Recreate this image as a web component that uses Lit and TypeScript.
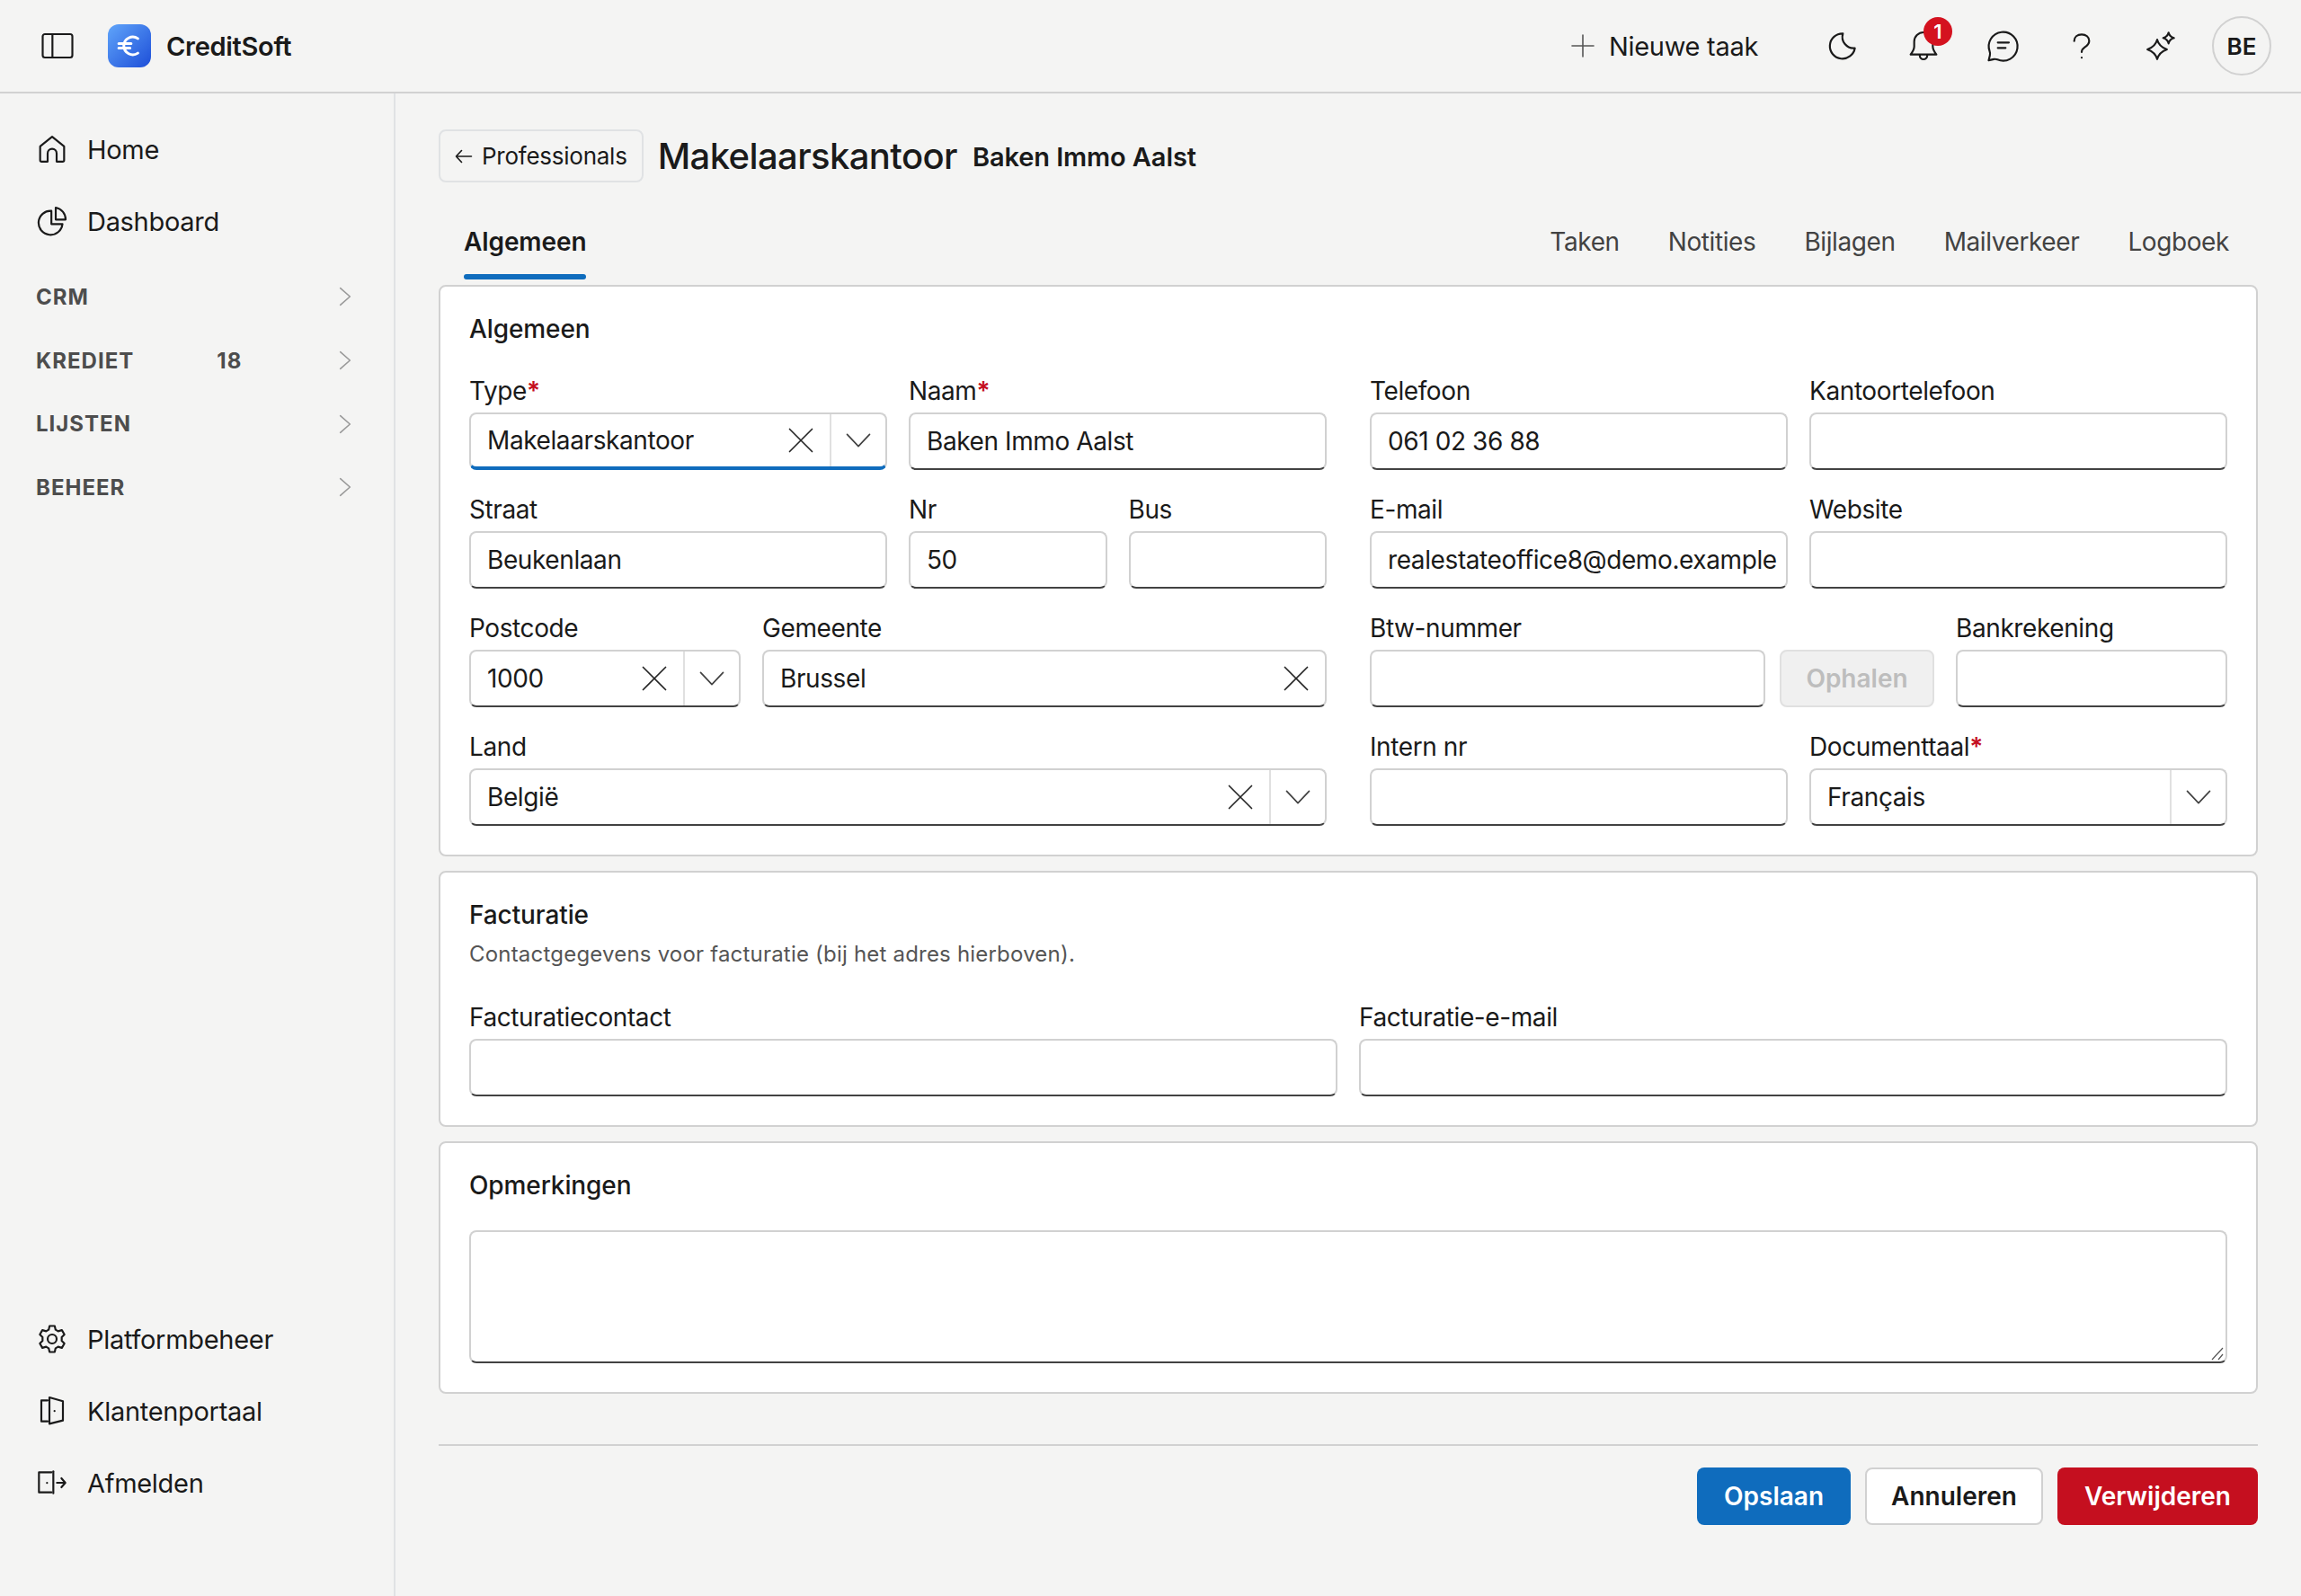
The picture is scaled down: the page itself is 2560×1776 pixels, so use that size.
import { LitElement, html, css, svg } from 'lit';
import { customElement } from 'lit/decorators.js';

const icon = (body: unknown, size = 40, sw = 1.3) => html`<svg class="icon" width=${size} height=${size} viewBox="0 0 24 24" fill="none" stroke="currentColor" stroke-width=${sw} stroke-linecap="round" stroke-linejoin="round">${body}</svg>`;

const icons = {
  panel: svg`<rect x="2.100" y="4.200" width="19.800" height="15.600" rx="1.500"/><path d="M8.600 4.200v15.600"/>`,
  home: svg`<path d="M5 20.300h4v-5.500a3 3 0 0 1 6 0v5.500h4a1 1 0 0 0 1-1v-9.200L12 3.700 4 10.100v9.200a1 1 0 0 0 1 1z"/>`,
  pie: svg`<path d="M11.500 5.200A8 8 0 1 0 18.900 14h-7.400z"/><path d="M14.400 3A8 8 0 0 1 21 11h-6.600z"/>`,
  gear: svg`<circle cx="12" cy="12" r="3"/><path d="M10.300 3.300h3.400l.6 2.500 1.700 1 2.500-.7 1.700 2.900-1.800 1.800v2.400l1.800 1.800-1.700 2.900-2.500-.7-1.700 1-.6 2.500h-3.400l-.6-2.500-1.700-1-2.500.7-1.700-2.900 1.800-1.800v-2.400L3.800 9l1.700-2.900 2.500.7 1.700-1z"/>`,
  door: svg`<path d="M9 5H4.800v14H9"/><path d="M10.200 3l9 2.600v12.800l-9 2.200z"/><path d="M13.600 12v.1"/>`,
  exit: svg`<path d="M11.600 5H3.200v13.400l8.400 0"/><path d="M12.800 4.400V19"/><path d="M8.600 12v.1"/><path d="M15.200 12h5.600M18.200 9l2.600 3-2.600 3"/>`,
  chevron: svg`<path d="M8 5l8 7-8 7"/>`,
  down: svg`<path d="M4.500 8L12 16l7.500-8"/>`,
  close: svg`<path d="M4.500 4.500l15 15M19.500 4.500l-15 15"/>`,
  plus: svg`<path d="M12 3v18M3 12h18"/>`,
  back: svg`<path d="M20.500 12H3.500M9.500 5.500L3.500 12l6 6.500"/>`,
  moon: svg`<path d="M11 3.800A8.400 8.400 0 1 0 19 13.500 7.500 7.500 0 0 1 11 3.800z"/>`,
  bell: svg`<path d="M12 3a6.200 6.200 0 0 0-6.200 6.200v3.300c0 2-1 3.500-2.400 5.300h17.200c-1.400-1.800-2.400-3.300-2.400-5.300V9.200A6.200 6.200 0 0 0 12 3z"/><path d="M9.500 18v.5a2.500 2.500 0 0 0 5 0V18"/>`,
  chat: svg`<path d="M3.400 15.800c.4 1 .4 1.500.1 2.700l-.8 3.200 3.500-.8c1-.2 1.500-.1 2.400.3A9.600 9.600 0 1 0 3.400 15.800z"/><path d="M8.800 9.800h7.400M8.800 13.400H14"/>`,
  help: svg`<path d="M7 8.800c0-2.800 2.200-4.400 5-4.400s5 1.700 5 4.300c0 2.200-1.400 3.200-3 4.300-1.300.9-2 1.700-2 3.200"/><path d="M12 19.800v.1"/>`,
  spark: svg`<path d="M9.600 7.900c.9 3.300 2.700 5.100 6.500 6.500-3.800 1.400-5.600 3.200-6.500 6.500-.9-3.300-2.700-5.100-6.500-6.500 3.800-1.400 5.600-3.200 6.500-6.500z"/><path d="M17.200 3.200c.4 1.800 1.500 3 3.600 3.600-2.100.6-3.200 1.800-3.600 3.600-.4-1.800-1.500-3-3.600-3.600 2.100-.6 3.200-1.800 3.600-3.600z"/>`,
};

@customElement('app-root')
export class AppRoot extends LitElement {
  static override styles = css`
    :host {
      display: block;
      height: 1776px;
      background: #f4f4f3;
      color: #1a1a1a;
      font-family: Inter, 'Liberation Sans', sans-serif;
      font-size: 28px;
      overflow: hidden;
    }
    .icon { display: block; flex: none; }

    header {
      height: 102px;
      box-sizing: content-box;
      border-bottom: 2px solid #d1d1d1;
      display: flex;
      align-items: center;
      padding: 0 33px 0 44px;
    }
    .logo {
      width: 48px;
      height: 48px;
      border-radius: 12px;
      margin-left: 36px;
      background: linear-gradient(135deg, #60a5fa, #1d4ed8);
      display: flex;
      align-items: center;
      justify-content: center;
      color: #fff;
    }
    .brand { font-size: 29px; letter-spacing: -0.3px; font-weight: 600; margin-left: 17px; }
    .new-task { margin-left: auto; display: flex; align-items: center; gap: 13px; font-size: 29px; letter-spacing: -0.3px; }
    .new-task .icon { color: #555; }
    .top-icons { display: flex; align-items: center; margin-left: 52px; }
    .top-btn { width: 88px; display: flex; justify-content: center; position: relative; }
    .badge {
      position: absolute;
      left: 44px;
      top: -12px;
      width: 32px;
      height: 32px;
      border-radius: 50%;
      background: #d4121f;
      color: #fff;
      font-size: 22px;
      font-weight: 600;
      display: flex;
      align-items: center;
      justify-content: center;
    }
    .avatar {
      width: 66px;
      height: 66px;
      box-sizing: border-box;
      border: 2px solid #d1d1d1;
      border-radius: 50%;
      margin-left: 13px;
      display: flex;
      align-items: center;
      justify-content: center;
      font-size: 26px;
      font-weight: 600;
    }

    .body { display: flex; height: 1672px; }
    aside {
      width: 440px;
      flex: none;
      box-sizing: border-box;
      border-right: 2px solid #e0e2e4;
      display: flex;
      flex-direction: column;
      padding-top: 22px;
      padding-bottom: 86px;
    }
    .nav-item {
      height: 80px;
      display: flex;
      align-items: center;
      gap: 19px;
      padding-left: 38px;
      font-size: 29px;
      letter-spacing: -0.3px;
    }
    .group {
      height: 70.7px;
      display: flex;
      align-items: center;
      padding: 0 38px 0 40px;
      font-size: 24px;
      font-weight: 700;
      letter-spacing: 1px;
      color: #4d4d4d;
    }
    .groups { margin-top: 9px; }
    .group .count { margin-left: 92px; }
    .group .icon { margin-left: auto; color: #999; }
    .spacer { flex: 1; }

    main { flex: 1; min-width: 0; padding: 40px 48px 0; }
    .title-row { display: flex; align-items: center; height: 59px; }
    .back {
      height: 59px;
      box-sizing: border-box;
      border: 2px solid #e0e2e4;
      border-radius: 8px;
      padding: 0 16px 0 14px;
      display: flex;
      align-items: center;
      gap: 8px;
      font-size: 26px;
      letter-spacing: -0.25px;
    }
    h1 { font-size: 40px; font-weight: 500; margin: 0 17px 0 16px; letter-spacing: -0.6px; }
    .subtitle { font-size: 29px; letter-spacing: -0.1px; font-weight: 600; margin-top: 2px; }

    .tabs {
      display: flex;
      height: 100px;
      margin-top: 16px;
      margin-bottom: -2px;
      padding: 0 32px 0 28px;
      gap: 54px;
      align-items: center;
      font-size: 28px;
      letter-spacing: -0.4px;
      color: #424242;
    }
    .tab-active { position: relative; font-weight: 600; letter-spacing: -0.1px; color: #1a1a1a; margin-right: auto; }
    .tab-active::after {
      content: '';
      position: absolute;
      left: 0;
      right: 0;
      bottom: -25px;
      height: 6px;
      border-radius: 3px;
      background: #0f6cbd;
    }

    .panel {
      background: #fff;
      border: 2px solid #d1d1d1;
      border-radius: 8px;
      padding: 29px 32px 32px;
      margin-bottom: 16px;
    }
    h2 { font-size: 28px; font-weight: 500; margin: 0; line-height: 36px; letter-spacing: -0.1px; }
    .desc { font-size: 24px; letter-spacing: 0.2px; color: #555; line-height: 32px; margin-top: 10px; }
    .form { display: grid; grid-template-columns: 1fr 1fr; column-gap: 48px; margin-top: 35px; }
    .twelve { display: grid; grid-template-columns: repeat(12, 1fr); column-gap: 24px; row-gap: 28px; }
    .s3 { grid-column: span 3; }
    .s4 { grid-column: span 4; }
    .s6 { grid-column: span 6; }
    .s8 { grid-column: span 8; }
    .s12 { grid-column: span 12; }
    label { display: block; line-height: 32px; margin-bottom: 8px; font-size: 28px; letter-spacing: -0.4px; }
    label b { color: #c50f1f; font-weight: 600; }

    .input {
      height: 64px;
      box-sizing: border-box;
      border: 2px solid #d1d1d1;
      border-bottom: 2px solid #424242;
      border-radius: 8px;
      background: #fff;
      display: flex;
      align-items: center;
      padding-left: 18px;
      font-size: 28px;
      letter-spacing: -0.4px;
      white-space: nowrap;
      overflow: hidden;
    }
    .input .val { flex: 1; min-width: 0; }
    .input .x { margin-right: 12px; color: #242424; }
    .input .arrow {
      width: 62px;
      height: 100%;
      flex: none;
      border-left: 2px solid #e0e0e0;
      display: flex;
      align-items: center;
      justify-content: center;
      box-sizing: border-box;
      color: #424242;
    }
    .focus { border-bottom: 4px solid #0f6cbd; }
    .with-btn { display: flex; gap: 16px; }
    .with-btn .input { flex: 1; min-width: 0; }
    .fetch {
      width: 172px;
      height: 64px;
      box-sizing: border-box;
      border: 2px solid #e0e0e0;
      border-radius: 8px;
      background: #f0f0f0;
      color: #bdbdbd;
      font-size: 28px;
      font-weight: 600;
      display: flex;
      align-items: center;
      justify-content: center;
    }
    .two { display: grid; grid-template-columns: 1fr 1fr; column-gap: 24px; margin-top: 38px; }
    .area {
      height: 148px;
      margin-top: 32px;
      position: relative;
    }
    .area .grip { position: absolute; right: 0; bottom: 0; color: #555; }

    .actions {
      border-top: 2px solid #d1d1d1;
      margin-top: 56px;
      padding-top: 24px;
      display: flex;
      justify-content: flex-end;
      gap: 16px;
    }
    .btn {
      height: 64px;
      box-sizing: border-box;
      border-radius: 8px;
      padding: 0 30px;
      display: flex;
      align-items: center;
      font-size: 28px;
      font-weight: 600;
      color: #fff;
    }
    .primary { background: #0f6cbd; }
    .secondary { background: #fff; border: 2px solid #d1d1d1; color: #1a1a1a; padding: 0 27px; }
    .danger { background: #c50f1f; }
  `;

  private field(label: string, value = '', opts: { req?: boolean; clear?: boolean; arrow?: boolean; focus?: boolean; span?: string } = {}) {
    return html`<div class=${opts.span ?? ''}>
      <label>${label}${opts.req ? html`<b>*</b>` : ''}</label>
      ${this.box(value, opts)}
    </div>`;
  }

  private box(value: string, opts: { clear?: boolean; arrow?: boolean; focus?: boolean } = {}) {
    return html`<div class="input ${opts.focus ? 'focus' : ''}">
      <span class="val">${value}</span>
      ${opts.clear ? html`<span class="x">${icon(icons.close, 40, 1)}</span>` : ''}
      ${opts.arrow ? html`<span class="arrow">${icon(icons.down, 40, 1)}</span>` : ''}
    </div>`;
  }

  override render() {
    return html`
      <header>
        ${icon(icons.panel, 40, 1.3)}
        <div class="logo">
          <svg width="30" height="30" viewBox="0 0 24 24" fill="none" stroke="currentColor" stroke-width="2.400" stroke-linecap="round"><path d="M19.500 5.500A8 8 0 0 0 7 12a8 8 0 0 0 12.500 6.500M2.500 10h11M2.500 14h10"/></svg>
        </div>
        <div class="brand">CreditSoft</div>
        <div class="new-task">${icon(icons.plus, 32, 1.2)}<span>Nieuwe taak</span></div>
        <div class="top-icons">
          <div class="top-btn">${icon(icons.moon)}</div>
          <div class="top-btn">${icon(icons.bell)}<span class="badge">1</span></div>
          <div class="top-btn">${icon(icons.chat)}</div>
          <div class="top-btn">${icon(icons.help)}</div>
          <div class="top-btn">${icon(icons.spark)}</div>
        </div>
        <div class="avatar">BE</div>
      </header>
      <div class="body">
        <aside>
          <div class="nav-item">${icon(icons.home)}Home</div>
          <div class="nav-item">${icon(icons.pie)}Dashboard</div>
          <div class="groups">
            <div class="group">CRM${icon(icons.chevron, 32, 1.2)}</div>
            <div class="group"><span>KREDIET</span><span class="count">18</span>${icon(icons.chevron, 32, 1.2)}</div>
            <div class="group">LIJSTEN${icon(icons.chevron, 32, 1.2)}</div>
            <div class="group">BEHEER${icon(icons.chevron, 32, 1.2)}</div>
          </div>
          <div class="spacer"></div>
          <div class="nav-item">${icon(icons.gear)}Platformbeheer</div>
          <div class="nav-item">${icon(icons.door)}Klantenportaal</div>
          <div class="nav-item">${icon(icons.exit)}Afmelden</div>
        </aside>
        <main>
          <div class="title-row">
            <div class="back">${icon(icons.back, 24, 1.6)}Professionals</div>
            <h1>Makelaarskantoor</h1>
            <span class="subtitle">Baken Immo Aalst</span>
          </div>
          <div class="tabs">
            <span class="tab-active">Algemeen</span>
            <span>Taken</span><span>Notities</span><span>Bijlagen</span><span>Mailverkeer</span><span>Logboek</span>
          </div>
          <section class="panel">
            <h2>Algemeen</h2>
            <div class="form">
              <div class="twelve">
                ${this.field('Type', 'Makelaarskantoor', { req: true, clear: true, arrow: true, focus: true, span: 's6' })}
                ${this.field('Naam', 'Baken Immo Aalst', { req: true, span: 's6' })}
                ${this.field('Straat', 'Beukenlaan', { span: 's6' })}
                ${this.field('Nr', '50', { span: 's3' })}
                ${this.field('Bus', '', { span: 's3' })}
                ${this.field('Postcode', '1000', { clear: true, arrow: true, span: 's4' })}
                ${this.field('Gemeente', 'Brussel', { clear: true, span: 's8' })}
                ${this.field('Land', 'België', { clear: true, arrow: true, span: 's12' })}
              </div>
              <div class="twelve">
                ${this.field('Telefoon', '061 02 36 88', { span: 's6' })}
                ${this.field('Kantoortelefoon', '', { span: 's6' })}
                ${this.field('E-mail', 'realestateoffice8@demo.example', { span: 's6' })}
                ${this.field('Website', '', { span: 's6' })}
                <div class="s8">
                  <label>Btw-nummer</label>
                  <div class="with-btn">${this.box('')}<div class="fetch">Ophalen</div></div>
                </div>
                ${this.field('Bankrekening', '', { span: 's4' })}
                ${this.field('Intern nr', '', { span: 's6' })}
                ${this.field('Documenttaal', 'Français', { req: true, arrow: true, span: 's6' })}
              </div>
            </div>
          </section>
          <section class="panel">
            <h2>Facturatie</h2>
            <div class="desc">Contactgegevens voor facturatie (bij het adres hierboven).</div>
            <div class="two">
              ${this.field('Facturatiecontact')}
              ${this.field('Facturatie-e-mail')}
            </div>
          </section>
          <section class="panel">
            <h2>Opmerkingen</h2>
            <div class="input area">
              <svg class="grip" width="18" height="18" viewBox="0 0 18 18" fill="none" stroke="currentColor" stroke-width="1.200"><path d="M3 16L15 3M10 16l5-6"/></svg>
            </div>
          </section>
          <div class="actions">
            <div class="btn primary">Opslaan</div>
            <div class="btn secondary">Annuleren</div>
            <div class="btn danger">Verwijderen</div>
          </div>
        </main>
      </div>
    `;
  }
}
